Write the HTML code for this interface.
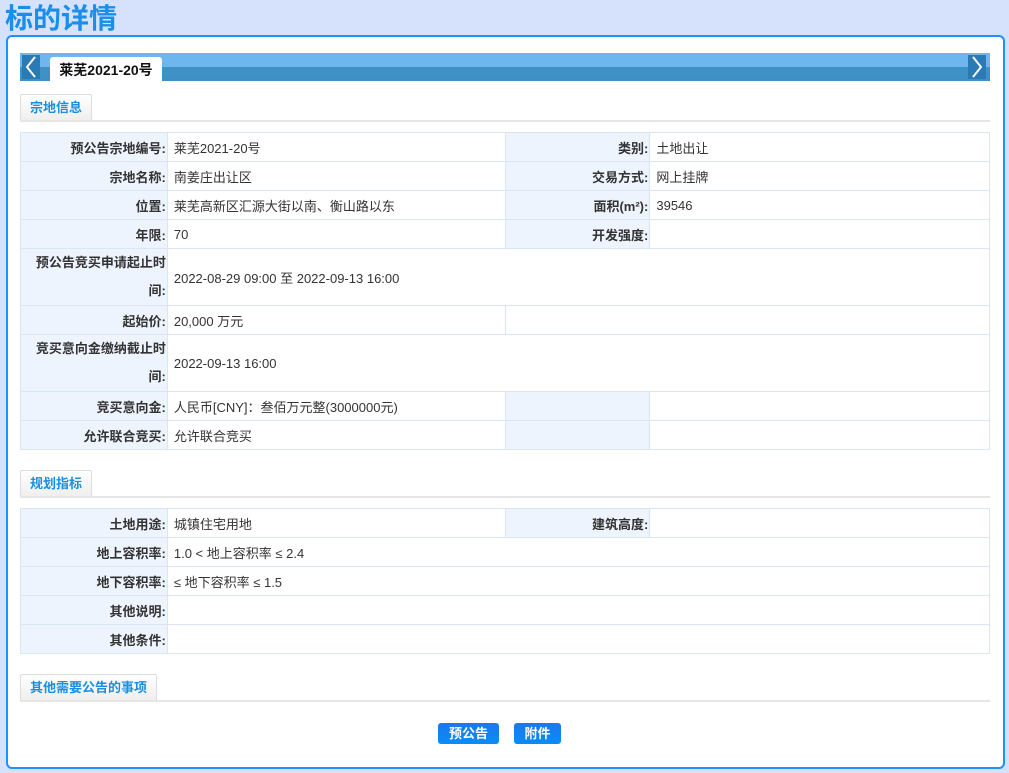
<!DOCTYPE html>
<html><head><meta charset="utf-8"><style>
*{box-sizing:border-box;margin:0;padding:0}
body{width:1009px;height:773px;background:#d6e1fc;font-family:"Liberation Sans","Noto Sans CJK SC",sans-serif;font-size:13px;color:#333;position:relative;overflow:hidden}
.title{position:absolute;left:5px;top:2px;font-size:28px;font-weight:bold;color:#1b8ee9;line-height:34px;letter-spacing:0px}
.panel{position:absolute;left:6px;top:35px;width:999px;height:734px;background:#fff;border:2px solid #1e90ff;border-radius:6px}
.bar{position:absolute;left:20px;top:53px;width:970px;height:28px;background:linear-gradient(#6db6ee 0,#6db6ee 50%,#3f93c8 50%,#3f8fc3 100%)}
.arr{position:absolute;top:2px;width:18px;height:24px;background:#2a7ab5;color:#fff}
.tab{position:absolute;left:30px;top:4px;width:112px;height:24px;background:#fff;border-radius:3px 3px 0 0;font-weight:bold;font-size:14px;color:#111;text-align:center;line-height:26px}
.sh{position:absolute;left:20px;height:27px;border:1px solid #ddd;border-bottom:none;background:linear-gradient(#fff,#eee);color:#1a8fe0;font-weight:bold;font-size:13px;line-height:26px;padding:0 9px;border-radius:2px 2px 0 0}
.line{position:absolute;left:20px;width:970px;height:2px;background:#e6e6e6}
.tbl{position:absolute;left:20px;width:970px;border-top:1px solid #dbe6f5;border-left:1px solid #dbe6f5}
.r{display:flex;border-bottom:1px solid #dbe6f5}
.c{border-right:1px solid #dbe6f5;display:flex;align-items:center;padding:0 6px}
.l{background:#eef4fd;justify-content:flex-end;font-weight:bold;color:#333;text-align:right;padding-right:1px}
.w1{width:147px}.w2{width:338px}.w3{width:145px}.w4{width:340px}.wr{width:823px}
.btn{position:absolute;top:723px;height:21px;background:linear-gradient(#1a78f0,#0a8cf5);color:#fff;font-weight:bold;font-size:13px;text-align:center;line-height:21px;border-radius:3px}
</style></head><body>
<div class="title">标的详情</div>
<div class="panel"></div>
<div class="bar">
 <div class="arr" style="left:2px"><svg width="18" height="24"><path d="M13 2 L5 12 L13 22" stroke="#fff" stroke-width="2" fill="none"/></svg></div>
 <div class="tab">莱芜2021-20号</div>
 <div class="arr" style="left:948px"><svg width="18" height="24"><path d="M5 2 L13 12 L5 22" stroke="#fff" stroke-width="2" fill="none"/></svg></div>
</div>
<div class="sh" style="top:94px">宗地信息</div><div class="line" style="top:120px"></div>
<div class="tbl" style="top:132px">
 <div class="r" style="height:29px"><div class="c l w1">预公告宗地编号:</div><div class="c w2">莱芜2021-20号</div><div class="c l w3">类别:</div><div class="c w4">土地出让</div></div>
 <div class="r" style="height:29px"><div class="c l w1">宗地名称:</div><div class="c w2">南姜庄出让区</div><div class="c l w3">交易方式:</div><div class="c w4">网上挂牌</div></div>
 <div class="r" style="height:29px"><div class="c l w1">位置:</div><div class="c w2">莱芜高新区汇源大街以南、衡山路以东</div><div class="c l w3">面积(m²):</div><div class="c w4">39546</div></div>
 <div class="r" style="height:29px"><div class="c l w1">年限:</div><div class="c w2">70</div><div class="c l w3">开发强度:</div><div class="c w4"></div></div>
 <div class="r" style="height:57px"><div class="c l w1" style="line-height:28px">预公告竞买申请起止时间:</div><div class="c wr">2022-08-29 09:00 至 2022-09-13 16:00</div></div>
 <div class="r" style="height:29px"><div class="c l w1">起始价:</div><div class="c w2">20,000 万元</div><div class="c w4" style="width:485px"></div></div>
 <div class="r" style="height:57px"><div class="c l w1" style="line-height:28px">竞买意向金缴纳截止时间:</div><div class="c wr">2022-09-13 16:00</div></div>
 <div class="r" style="height:29px"><div class="c l w1">竞买意向金:</div><div class="c w2">人民币[CNY]：叁佰万元整(3000000元)</div><div class="c l w3"></div><div class="c w4"></div></div>
 <div class="r" style="height:29px"><div class="c l w1">允许联合竞买:</div><div class="c w2">允许联合竞买</div><div class="c l w3"></div><div class="c w4"></div></div>
</div>
<div class="sh" style="top:470px">规划指标</div><div class="line" style="top:496px"></div>
<div class="tbl" style="top:508px">
 <div class="r" style="height:29px"><div class="c l w1">土地用途:</div><div class="c w2">城镇住宅用地</div><div class="c l w3">建筑高度:</div><div class="c w4"></div></div>
 <div class="r" style="height:29px"><div class="c l w1">地上容积率:</div><div class="c wr">1.0 &lt; 地上容积率 ≤ 2.4</div></div>
 <div class="r" style="height:29px"><div class="c l w1">地下容积率:</div><div class="c wr">≤ 地下容积率 ≤ 1.5</div></div>
 <div class="r" style="height:29px"><div class="c l w1">其他说明:</div><div class="c wr"></div></div>
 <div class="r" style="height:29px"><div class="c l w1">其他条件:</div><div class="c wr"></div></div>
</div>
<div class="sh" style="top:674px">其他需要公告的事项</div><div class="line" style="top:700px"></div>
<div class="btn" style="left:438px;width:61px">预公告</div>
<div class="btn" style="left:514px;width:47px">附件</div>
</body></html>
